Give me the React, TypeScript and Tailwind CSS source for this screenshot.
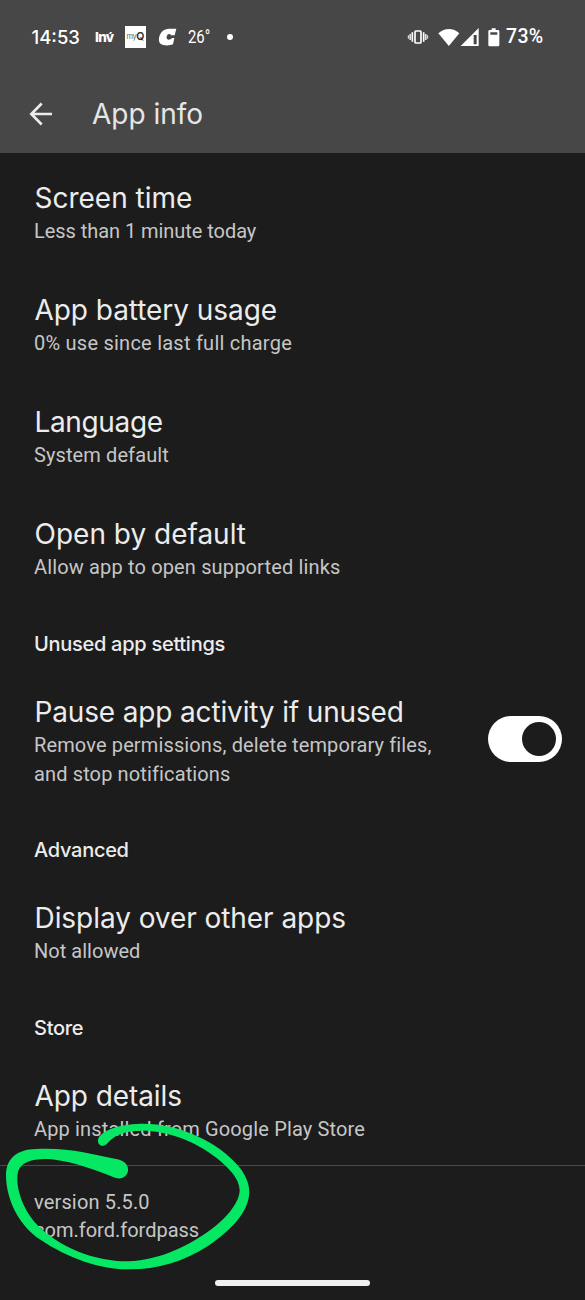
import React from "react";

function Title({ children, className = "" }: { children: string; className?: string }) {
  return (
    <div className={"ml-[0.5px] font-[Inter,sans-serif] text-[28px] leading-[36px] whitespace-nowrap text-[#ececec] " + className}>
      {children}
    </div>
  );
}

function Sub({ children, className = "tracking-[0.15px]" }: { children: string; className?: string }) {
  return (
    <div className={"font-[Roboto,sans-serif] text-[20px] leading-[28.7px] whitespace-nowrap text-[#c6c6c6] " + className}>
      {children}
    </div>
  );
}

function Row({ title, titleClass, children }: { title: string; titleClass?: string; children: React.ReactNode }) {
  return (
    <div className="h-[112px] pt-[27px] pl-[34px]">
      <Title className={titleClass}>{title}</Title>
      <div className="pt-px">{children}</div>
    </div>
  );
}

function Section({ children }: { children: string }) {
  return (
    <h2 className="h-[66px] pt-[29px] pl-[34px] font-[Inter,sans-serif] text-[20px] leading-[28px] font-medium tracking-[-0.28px] text-[#ececec]">
      {children}
    </h2>
  );
}

function StatusBar() {
  return (
    <div className="flex h-[74px] items-center text-white">
      <span className="ml-[31.5px] w-[63.5px] font-[Inter,sans-serif] text-[18.5px] leading-[24px] font-medium">14:53</span>
      <span className="w-[30px] font-[Inter,sans-serif] text-[13.5px] leading-[24px] font-extrabold tracking-[-0.7px]">
        Inv́
      </span>
      <span className="flex h-[22px] w-[21px] items-center justify-center bg-white font-[Inter,sans-serif] text-[#2b2b2b]">
        <span className="text-[7.5px] tracking-[-0.5px] text-[#666]">my</span>
        <span className="text-[10.5px] font-semibold">Q</span>
      </span>
      <svg className="ml-[12px]" width="19" height="18" viewBox="0 0 57 54" fill="currentColor">
        <path d="M55 2 L50 22 H39 C37 17 31 17 28 21 C24 27 25 34 31 35 C36 35 40 33 42 30 H49 L45 49 C38 52 29 53 20 52 C8 51 1 43 3 31 C5 13 18 2 33 2 Z" />
      </svg>
      <span className="ml-[11px] w-[39px] font-[Roboto,sans-serif] text-[19px] leading-[24px]">
        <span className="inline-block origin-left scale-x-[0.78]">26°</span>
      </span>
      <span className="h-[6px] w-[6px] rounded-full bg-white" />
      <svg className="ml-[174px]" width="22" height="18" viewBox="0 0 66 54" fill="none" stroke="currentColor">
        <rect x="24" y="9" width="18" height="36" rx="2.500" strokeWidth="5" />
        <path d="M16 13V41M50 13V41" strokeWidth="5" />
        <path d="M9.500 18V36M56.500 18V36" strokeWidth="4" />
        <path d="M4 22V32M62 22V32" strokeWidth="3" />
      </svg>
      <svg className="ml-[9px]" width="44" height="20" viewBox="0 0 132 60" fill="currentColor">
        <path d="M1 19 C20 2 46 2 64 19 L32.500 57 Z" />
        <path fillRule="evenodd" d="M68 57 L122 3 V57 Z M107 24 V52 H116 V24 Z" />
      </svg>
      <svg className="ml-[6px]" width="12" height="19" viewBox="0 0 36 57">
        <path fill="currentColor" fillRule="evenodd" d="M11 1 H23 V6 H30 Q34 6 34 10 V51 Q34 55 30 55 H5 Q1 55 1 51 V10 Q1 6 5 6 H11 Z M7 13 V20 H28 V13 Z" />
      </svg>
      <span className="ml-[6px] font-[Roboto,sans-serif] text-[19.5px] leading-[24px] font-medium tracking-[0.3px]">73%</span>
    </div>
  );
}

export default function App() {
  return (
    <div className="relative flex h-[1300px] w-full flex-col overflow-hidden bg-[#1c1c1c]">
      <header className="h-[153px] shrink-0 bg-[#474747]">
        <StatusBar />
        <div className="flex h-[79px] items-center pl-[29px]">
          <svg width="23" height="24" viewBox="0 0 23 24" fill="none" stroke="#ececec" strokeWidth="2.600">
            <path d="M23 12H2.500M12.700 1.500L2.300 12L12.700 22.500" />
          </svg>
          <h1 className="ml-[40px] font-[Inter,sans-serif] text-[28px] leading-[36px] text-[#e6e6e6]">App info</h1>
        </div>
      </header>

      <main>
        <Row title="Screen time">
          <Sub className="tracking-[-0.05px]">Less than 1 minute today</Sub>
        </Row>
        <Row title="App battery usage" titleClass="tracking-[-0.05px]">
          <Sub className="tracking-[0.24px]">0% use since last full charge</Sub>
        </Row>
        <Row title="Language" titleClass="tracking-[-0.35px]">
          <Sub className="tracking-[0.1px]">System default</Sub>
        </Row>
        <Row title="Open by default">
          <Sub>Allow app to open supported links</Sub>
        </Row>
        <Section>Unused app settings</Section>
        <div className="flex h-[140px] justify-between pt-[27px] pr-[23px] pl-[34px]">
          <div>
            <Title className="tracking-[-0.15px]">Pause app activity if unused</Title>
            <div className="pt-px">
              <Sub className="tracking-[0.13px]">Remove permissions, delete temporary files,</Sub>
              <Sub className="tracking-[0.13px]">and stop notifications</Sub>
            </div>
          </div>
          <button
            type="button"
            role="switch"
            aria-checked="true"
            aria-label="Pause app activity if unused"
            className="mt-[22px] flex h-[46px] w-[74px] items-center justify-end rounded-full bg-white pr-[6px]"
          >
            <span className="h-[34px] w-[34px] rounded-full bg-[#1c1c1c]" />
          </button>
        </div>
        <Section>Advanced</Section>
        <Row title="Display over other apps" titleClass="tracking-[-0.06px]">
          <Sub className="tracking-[0.03px]">Not allowed</Sub>
        </Row>
        <Section>Store</Section>
        <Row title="App details" titleClass="tracking-[-0.08px]">
          <Sub>App installed from Google Play Store</Sub>
        </Row>
      </main>

      <footer className="mt-[2px] flex flex-1 flex-col border-t border-[#4a4a4a] pt-[21.5px] pl-[34px]">
        <Sub>version 5.5.0</Sub>
        <Sub className="tracking-[0px]">com.ford.fordpass</Sub>
      </footer>

      <div className="absolute bottom-[14px] left-[215px] h-[6px] w-[155px] rounded-full bg-[#f0f0f0]" />

      <svg className="absolute top-[1070px] left-0" width="300" height="230" viewBox="0 0 900 690" fill="#06e763">
        <path d="M296 203 C310 180 355 163 420 161 C535 158 655 215 717 290 C742 321 751 352 747 378 C739 433 690 483 625 527 C550 576 465 600 380 598 C282 596 185 554 108 500 C52 455 18 385 18 315 C19 266 50 238 108 237 C205 232 275 252 352 268 C375 272 387 288 384 304 C380 321 363 330 345 323 C285 300 220 275 155 268 C105 264 68 273 55 302 C45 336 59 408 112 465 C178 532 285 575 385 574 C480 571 570 525 635 477 C685 440 719 394 719 360 C717 325 690 297 650 264 C585 213 505 182 425 182 C370 182 340 198 320 222 C303 236 288 219 296 203 Z" />
      </svg>
    </div>
  );
}
